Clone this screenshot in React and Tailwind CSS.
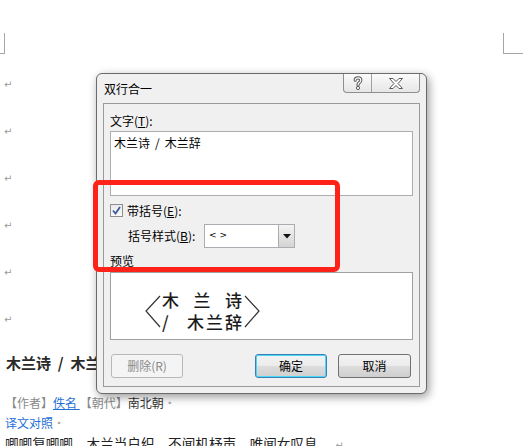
import React from 'react';

function Mark() {
  return <span className="text-[10px] leading-none text-[#9a9a9a] font-['DejaVu_Sans',sans-serif]">↵</span>;
}

function HelpIcon() {
  return (
    <svg width="12" height="14" viewBox="0 0 12 14">
      <path d="M3.2 4.2C3.2 1.2 8.8 1.2 8.8 4.2C8.8 6.6 6 6.4 6 9" fill="none" stroke="#5a5a5a" strokeWidth="3.2" strokeLinecap="round" />
      <path d="M3.2 4.2C3.2 1.2 8.8 1.2 8.8 4.2C8.8 6.6 6 6.4 6 9" fill="none" stroke="#fff" strokeWidth="1.2" strokeLinecap="round" />
      <circle cx="6" cy="12" r="1.6" fill="#fff" stroke="#5a5a5a" strokeWidth="1" />
    </svg>
  );
}

function CloseIcon() {
  return (
    <svg width="14" height="11" viewBox="0 0 14 11">
      <polygon
        points="0.5,0.5 4,0.5 7,3.5 10,0.5 13.5,0.5 9,5.5 13.5,10.5 10,10.5 7,7.5 4,10.5 0.5,10.5 5,5.5"
        fill="#fff"
        stroke="#5a5a5a"
        strokeWidth="1"
        strokeLinejoin="round"
      />
    </svg>
  );
}

function WinButton({ children, primary, disabled, className = '' }) {
  const border = disabled
    ? 'border-[#b5b9bc]'
    : primary
    ? 'border-[#3c7fb1] shadow-[inset_0_0_0_1px_#48d8fb]'
    : 'border-[#707070]';
  const bg = disabled
    ? 'bg-[#f4f4f4] text-[#8a8a8a]'
    : 'bg-[linear-gradient(#f3f3f3_0%,#ebebeb_50%,#dddddd_50%,#cfcfcf_100%)] text-black';
  return (
    <div className={`h-[24px] flex items-center justify-center border rounded-[3px] text-[12px] ${border} ${bg} ${className}`}>
      {children}
    </div>
  );
}

export default function App() {
  return (
    <div className="relative w-[532px] h-[446px] overflow-hidden bg-white font-['Noto_Sans_CJK_SC',sans-serif] text-[#333]">
      {/* margin corner marks */}
      <div className="absolute left-0 top-[33px] w-[5px] h-[21px] border-r border-b border-[#a6a6a6]" />
      <div className="absolute left-[503px] top-[33px] w-[20px] h-[21px] border-l border-b border-[#a6a6a6]" />

      {/* document */}
      <div className="flex flex-col pl-[4px] pt-[61px]">
        {[0, 1, 2, 3, 4, 5].map((i) => (
          <div key={i} className="h-[47px] flex items-center">
            <Mark />
          </div>
        ))}
        <div className="h-[40px] flex items-center pl-[2px] text-[15px] font-bold text-[#2a2a2a] whitespace-nowrap">
          木兰诗&nbsp;&nbsp;/&nbsp;&nbsp;木兰辞
        </div>
        <div className="mt-[10px] h-[20px] flex items-center pl-[1px] text-[12px] whitespace-nowrap">
          <span className="text-[#8a8a8a]">【作者】</span>
          <span className="text-[#1f6fd6] underline">佚名&nbsp;</span>
          <span className="text-[#8a8a8a]">【朝代】</span>
          <span className="text-[#333]">南北朝</span>
          <span className="text-[8px] text-[#aaa] ml-[2px] self-end mb-[4px]">▪</span>
        </div>
        <div className="h-[20px] flex items-center pl-[1px] text-[12px] whitespace-nowrap">
          <span className="text-[#1f6fd6]">译文对照</span>
          <span className="text-[8px] text-[#aaa] ml-[2px] self-end mb-[4px]">▪</span>
        </div>
        <div className="h-[20px] flex items-center pl-[1px] text-[13.6px] text-[#222] whitespace-nowrap">
          唧唧复唧唧，木兰当户织，不闻机杼声，唯闻女叹息。
          <span className="ml-[4px]">
            <Mark />
          </span>
        </div>
      </div>

      {/* dialog */}
      <div className="absolute left-[96px] top-[73px] w-[331px] h-[321px] flex flex-col border border-[#6b6b6b] rounded-[6px] bg-[#f0f0f0] shadow-[2px_3px_10px_rgba(0,0,0,0.4)] text-black">
        <div className="h-[29px] flex justify-between">
          <div className="pl-[7px] flex items-center text-[12px]">双行合一</div>
          <div className="mr-[6px] flex h-[19px] border border-t-0 border-[#8e8e8e] rounded-b-[4px] bg-linear-to-b from-[#fbfbfb] to-[#e6e6e6] overflow-hidden">
            <div className="w-[28px] flex items-center justify-center border-r border-[#a0a0a0]">
              <HelpIcon />
            </div>
            <div className="w-[47px] flex items-center justify-center">
              <CloseIcon />
            </div>
          </div>
        </div>

        <div className="mx-[6px] w-[317px] h-[284px] border border-[#9a9a9a] flex flex-col pl-[6px] pr-[6px] pt-[9px] pb-[8px] text-[12px]">
          <div className="h-[16px] flex items-center">
            文字(<span className="underline">T</span>):
          </div>
          <div className="mt-[2px] h-[65px] border border-[#abadb3] bg-white px-[3px] pt-[2px] leading-[18px]">
            木兰诗<span className="mx-[5px]">/</span>木兰辞
          </div>

          <div className="mt-[6px] h-[17px] flex items-center">
            <div className="w-[13px] h-[13px] border border-[#8f8f8f] bg-linear-to-b from-[#e9e9e9] to-[#fafafa] flex items-center justify-center">
              <svg width="9" height="9" viewBox="0 0 9 9">
                <path d="M1 4.5L3.5 7.5L8 1" fill="none" stroke="#3d5a9b" strokeWidth="1.8" />
              </svg>
            </div>
            <span className="ml-[4px]">
              带括号(<span className="underline">E</span>):
            </span>
          </div>

          <div className="mt-[5px] h-[24px] flex items-center pl-[18px]">
            <div className="w-[76px]">
              括号样式(<span className="underline">B</span>):
            </div>
            <div className="w-[91px] h-[24px] flex border border-[#abadb3] bg-white">
              <div className="flex-1 flex items-center pl-[4px] text-[9px] font-['DejaVu_Sans',sans-serif]">&lt; &gt;</div>
              <div className="w-[16px] border-l border-[#acacac] bg-linear-to-b from-[#f4f4f4] to-[#d4d4d4] flex items-center justify-center">
                <svg width="8" height="5" viewBox="0 0 8 5">
                  <polygon points="0,0 8,0 4,4.5" fill="#111" />
                </svg>
              </div>
            </div>
          </div>

          <div className="mt-[5px] h-[16px] flex items-center">预览</div>

          <div className="mt-[3px] h-[68px] border border-[#a0a0a0] bg-white flex items-start pt-[16px] pl-[34px]">
            <svg width="16" height="44" viewBox="0 0 16 44">
              <polyline points="15,7 1,22 15,38" fill="none" stroke="#333" strokeWidth="1.2" />
            </svg>
            <div className="w-[80px] ml-[1px] flex flex-col text-[17px] font-medium text-[#1a1a1a] leading-[20px]">
              <div className="h-[22px] flex items-center justify-between">
                <span>木</span>
                <span>兰</span>
                <span>诗</span>
              </div>
              <div className="h-[22px] flex items-center justify-between">
                <span>/</span>
                <span className="tracking-[2px] -mr-[2px]">木兰辞</span>
              </div>
            </div>
            <svg width="16" height="44" viewBox="0 0 16 44" className="ml-[2px]">
              <polyline points="1,7 15,22 1,38" fill="none" stroke="#333" strokeWidth="1.2" />
            </svg>
          </div>

          <div className="mt-[14px] flex">
            <WinButton disabled className="ml-[1px] w-[72px]">
              删除(R)
            </WinButton>
            <div className="ml-auto mr-[2px] flex gap-[11px]">
              <WinButton primary className="w-[72px]">
                确定
              </WinButton>
              <WinButton className="w-[73px]">取消</WinButton>
            </div>
          </div>
        </div>
      </div>

      {/* red highlight */}
      <div className="absolute left-[93px] top-[180px] w-[247px] h-[92px] border-[5px] border-[#ff2218] rounded-[6px]" />
    </div>
  );
}
